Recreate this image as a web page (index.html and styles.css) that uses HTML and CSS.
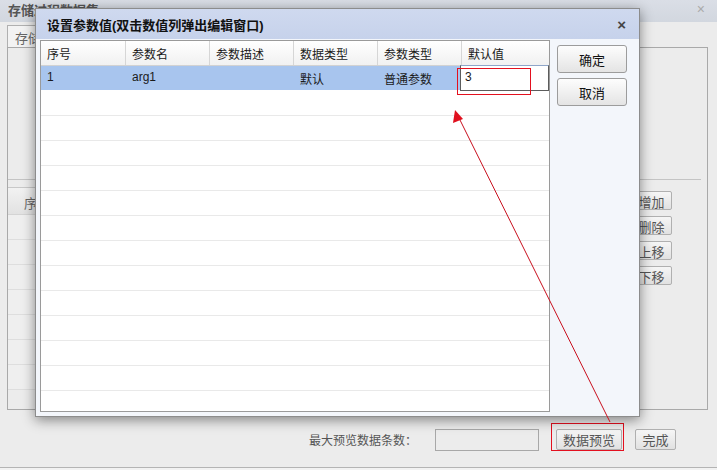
FILE: index.html
```html
<!DOCTYPE html>
<html lang="zh">
<head>
    <meta charset="UTF-8">
    <title>存储过程数据集</title>
    <link rel="stylesheet" href="styles.css">
</head>
<body>
    <div class="app">
        <div class="app-title">
            <span>存储过程数据集</span>
            <span class="app-close">×</span>
        </div>
        <div class="app-body">
            <div class="tabs"><div class="tab">存储过程</div></div>
            <div class="panel">
                <div class="panel-top"></div>
                <div class="panel-bottom">
                    <div class="bg-grid">
                        <div class="bg-head">序号</div>
                        <div class="bg-row"></div>
                        <div class="bg-row"></div>
                        <div class="bg-row"></div>
                        <div class="bg-row"></div>
                        <div class="bg-row"></div>
                        <div class="bg-row"></div>
                        <div class="bg-row"></div>
                    </div>
                    <div class="bg-btns">
                        <button class="bg-btn">增加</button>
                        <button class="bg-btn">删除</button>
                        <button class="bg-btn">上移</button>
                        <button class="bg-btn">下移</button>
                    </div>
                </div>
            </div>
            <div class="footer">
                <span class="footer-label">最大预览数据条数：</span>
                <input type="text" class="footer-input">
                <span class="preview-wrap">
                    <button class="bg-btn wide">数据预览</button>
                    <span class="mark preview-mark"></span>
                </span>
                <button class="bg-btn done">完成</button>
            </div>
        </div>
    </div>

    <!-- 参数设置弹窗 -->
    <div class="modal">
        <div class="modal-title">
            <span>设置参数值(双击数值列弹出编辑窗口)</span>
            <span class="modal-close">×</span>
        </div>
        <div class="modal-body">
            <div class="grid">
                <div class="grid-row grid-head">
                    <div class="cell">序号</div>
                    <div class="cell">参数名</div>
                    <div class="cell">参数描述</div>
                    <div class="cell">数据类型</div>
                    <div class="cell">参数类型</div>
                    <div class="cell">默认值</div>
                </div>
                <div class="grid-row selected">
                    <div class="cell">1</div>
                    <div class="cell">arg1</div>
                    <div class="cell"></div>
                    <div class="cell">默认</div>
                    <div class="cell">普通参数</div>
                    <div class="cell edit-cell">
                        <div class="editor">3</div>
                        <span class="mark editor-mark"></span>
                    </div>
                </div>
                <div class="grid-row"></div>
                <div class="grid-row"></div>
                <div class="grid-row"></div>
                <div class="grid-row"></div>
                <div class="grid-row"></div>
                <div class="grid-row"></div>
                <div class="grid-row"></div>
                <div class="grid-row"></div>
                <div class="grid-row"></div>
                <div class="grid-row"></div>
                <div class="grid-row"></div>
                <div class="grid-row"></div>
                <div class="grid-row"></div>
            </div>
            <div class="modal-btns">
                <button class="btn">确定</button>
                <button class="btn">取消</button>
            </div>
        </div>
    </div>

    <svg class="arrow" width="717" height="470" viewBox="0 0 717 470">
        <line x1="610" y1="422" x2="459" y2="118" stroke="#c8101e" stroke-width="1"/>
        <polygon points="455,110 463,119 453,123" fill="#e0101e"/>
    </svg>
</body>
</html>
```

FILE: styles.css
```css
* {
    box-sizing: border-box;
}
body {
    margin: 0;
    width: 717px;
    height: 470px;
    overflow: hidden;
    position: relative;
    font-family: 'Liberation Sans', 'Noto Sans CJK SC', sans-serif;
    font-size: 12px;
    background-color: #f2f2f2;
}
button {
    font-family: inherit;
    font-size: 12px;
    padding: 0;
    cursor: pointer;
}

/* 底层窗口 */
.app {
    height: 468px;
    background-color: #e9e9ea;
    border-bottom: 1px solid #b4b4b4;
}
.app-title {
    height: 22px;
    display: flex;
    align-items: center;
    justify-content: space-between;
    padding: 0 12px 4px 8px;
    background: linear-gradient(#dadee6, #d2d7df);
    color: #555;
    font-weight: bold;
    font-size: 13px;
}
.app-close {
    color: #aaa;
    font-weight: normal;
    font-size: 14px;
}
.app-body {
    padding: 3px 9px 0 7px;
    background-color: #ececec;
}
.tabs {
    height: 22px;
    display: flex;
}
.tab {
    padding: 2px 30px 0 7px;
    border: 1px solid #b0b0b0;
    border-bottom: none;
    background-color: #f3f3f3;
    color: #666;
    font-size: 13px;
}
.panel {
    height: 363px;
    border: 1px solid #a9a9a9;
    background-color: #ececec;
}
.panel-top {
    height: 132px;
    border-bottom: 1px solid #c4c4c4;
    margin-right: 6px;
}
.panel-bottom {
    margin-top: 7px;
    display: flex;
    gap: 6px;
}
.bg-grid {
    width: 617px;
    border-top: 1px solid #c8c8c8;
    background-color: #efefef;
}
.bg-head {
    height: 27px;
    padding: 5px 0 0 16px;
    background: linear-gradient(#f2f2f2, #e2e2e2);
    border-bottom: 1px solid #d4d4d4;
    color: #666;
    font-size: 13px;
}
.bg-row {
    height: 25px;
    border-bottom: 1px solid #dedede;
}
.bg-btns {
    display: flex;
    flex-direction: column;
    gap: 6px;
    padding-top: 4px;
}
.bg-btn {
    width: 41px;
    height: 19px;
    border: 1px solid #b0b0b0;
    border-radius: 2px;
    background: linear-gradient(#f6f6f6, #e1e1e1);
    color: #555;
    font-size: 13px;
}
.footer {
    height: 57px;
    display: flex;
    align-items: center;
    justify-content: flex-end;
    padding: 2px 32px 0 0;
}
.footer-label {
    color: #555;
    font-size: 12px;
    margin-right: 18px;
}
.footer-input {
    width: 104px;
    height: 22px;
    border: 1px solid #a8a8a8;
    background-color: #ececec;
    margin-right: 17px;
}
.preview-wrap {
    position: relative;
    margin-right: 13px;
}
.bg-btn.wide {
    width: 66px;
    height: 21px;
    display: block;
}
.bg-btn.done {
    height: 21px;
}
.mark {
    position: absolute;
    border: 1px solid #e3101f;
}
.preview-mark {
    left: -5px;
    top: -6px;
    width: 73px;
    height: 28px;
}

/* 弹窗 */
.modal {
    position: absolute;
    left: 35px;
    top: 8px;
    width: 605px;
    height: 409px;
    border: 1px solid #8c8c8c;
    background-color: #f3f6fb;
    box-shadow: 0 3px 12px rgba(0, 0, 0, 0.45);
}
.modal-title {
    height: 30px;
    display: flex;
    align-items: center;
    justify-content: space-between;
    padding: 0 13px 0 11px;
    background: linear-gradient(#cfd9ef, #c6d2eb);
    font-weight: bold;
    font-size: 13px;
    color: #111;
}
.modal-close {
    color: #444;
    font-size: 15px;
}
.modal-body {
    display: flex;
    padding: 1px 0 0 4px;
}
.grid {
    width: 510px;
    height: 372px;
    border: 1px solid #9a9a9a;
    background-color: #fff;
    overflow: hidden;
}
.grid-row {
    height: 25px;
    display: grid;
    grid-template-columns: 85px 84px 84px 84px 84px 1fr;
    border-bottom: 1px solid #e9e9e9;
}
.grid-head {
    height: 25px;
    background: linear-gradient(#ffffff, #f1f1f1);
    border-bottom: 1px solid #d2d2d2;
}
.grid-head .cell {
    border-right: 1px solid #d6d6d6;
}
.grid-head .cell:last-child {
    border-right: none;
}
.cell {
    padding: 4px 0 0 6px;
    color: #1a1a1a;
    white-space: nowrap;
}
.grid-row.selected {
    background-color: #a8c5ee;
    border-bottom-color: #fff;
}
.edit-cell {
    position: relative;
    padding: 0;
}
.editor {
    position: absolute;
    left: -2px;
    top: -1px;
    right: 0;
    bottom: -1px;
    padding: 4px 0 0 4px;
    background-color: #fff;
    border: 1px solid #5c5c5c;
    border-top-color: #8fa6c9;
}
.editor-mark {
    left: -5px;
    top: 2px;
    width: 74px;
    height: 27px;
}
.modal-btns {
    display: flex;
    flex-direction: column;
    gap: 5px;
    padding: 5px 0 0 7px;
}
.btn {
    width: 70px;
    height: 28px;
    border: 1px solid #9c9c9c;
    border-radius: 3px;
    background: linear-gradient(#fdfdfd, #e4e4e4);
    color: #111;
    font-size: 13px;
}

.arrow {
    position: absolute;
    left: 0;
    top: 0;
    pointer-events: none;
}
```
